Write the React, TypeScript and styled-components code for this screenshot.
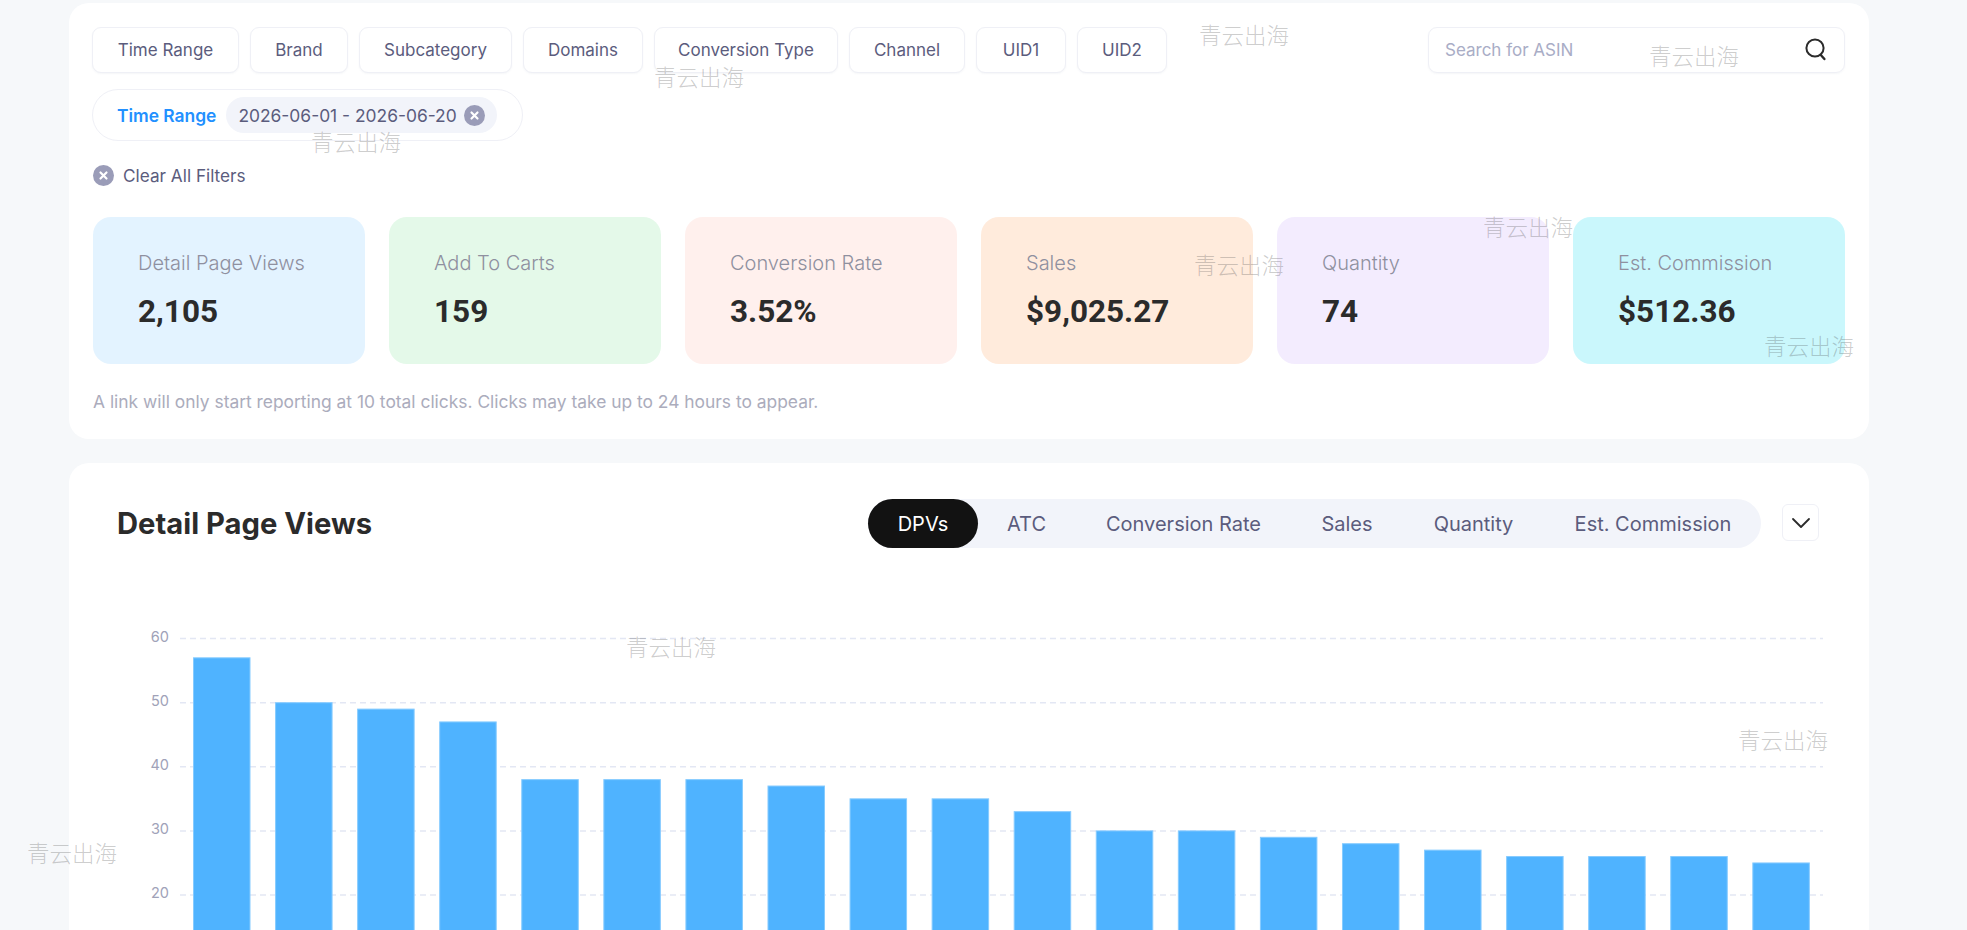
import React from 'react';
import styled, { createGlobalStyle } from 'styled-components';

const GlobalStyle = createGlobalStyle`
	html, body {
		margin: 0;
		padding: 0;
		height: 930px;
		overflow: hidden;
		background: #f6f8fa;
		font-family: Inter, "Noto Sans", sans-serif;
	}
`;

const Page = styled.div`
	position: relative;
	height: 930px;
	overflow: hidden;
	padding: 3px 98px 0 69px;
	box-sizing: border-box;
`;
const Card = styled.section`
	background: #fff;
	border-radius: 20px;
`;
const FilterCard = styled(Card)`
	padding: 24px 24px 23px 24px;
`;
const ChartCard = styled(Card)`
	margin-top: 24px;
	height: 560px;
	overflow: hidden;
`;
const TopRow = styled.div`
	display: flex;
	justify-content: space-between;
`;
const FilterList = styled.div`
	display: flex;
	gap: 11px;
	margin-left: -1px;
`;
const FilterButton = styled.button<{ $w: number }>`
	width: ${(p) => p.$w}px;
	height: 45.5px;
	padding: 0;
	background: #fff;
	border: 1px solid #eff0f6;
	border-radius: 9px;
	box-shadow: 0 1px 2px rgba(90, 95, 140, 0.06);
	color: #5b5c7d;
	font-family: inherit;
	font-size: 17px;
	box-sizing: border-box;
`;
const SearchBox = styled.div`
	display: flex;
	align-items: center;
	width: 417px;
	height: 45.5px;
	padding: 0 17px 0 16px;
	border: 1px solid #eff0f6;
	border-radius: 9px;
	box-shadow: 0 1px 2px rgba(90, 95, 140, 0.06);
	box-sizing: border-box;
`;
const SearchInput = styled.input`
	flex: 1;
	border: 0;
	outline: 0;
	padding: 0;
	font-family: inherit;
	font-size: 17px;
	background: transparent;

	&::placeholder {
		color: #a9adc6;
		opacity: 1;
	}
`;
const AppliedFilter = styled.div`
	display: inline-flex;
	align-items: center;
	gap: 10px;
	height: 52px;
	margin: 16.5px 0 0 -1px;
	padding: 0 25px 0 24px;
	border: 1px solid #eff0f6;
	border-radius: 26px;
	box-sizing: border-box;
`;
const AppliedLabel = styled.span`
	color: #2290ff;
	font-size: 17.4px;
	font-weight: 600;
`;
const Chip = styled.span`
	display: inline-flex;
	align-items: center;
	gap: 7px;
	height: 36px;
	padding: 0 12px;
	background: #f2f4fa;
	border-radius: 18px;
	color: #5b5c7d;
	font-size: 17.4px;
`;
const ClearRow = styled.div`
	display: flex;
	align-items: center;
	gap: 9px;
	height: 22px;
	margin-top: 23px;
	color: #5b5c7d;
	font-size: 17.2px;
`;
const Stats = styled.div`
	display: grid;
	grid-template-columns: repeat(6, 272px);
	gap: 24px;
	margin-top: 31px;
`;
const StatCard = styled.div<{ $bg: string }>`
	height: 147px;
	padding: 34px 0 0 45px;
	background: ${(p) => p.$bg};
	border-radius: 18px;
	box-sizing: border-box;
`;
const StatLabel = styled.div`
	color: #8f909f;
	font-size: 20px;
	font-weight: 300;
	line-height: 24px;
`;
const StatValue = styled.div`
	margin-top: 19px;
	color: #2b2b2b;
	font-family: Roboto, sans-serif;
	font-size: 31.5px;
	font-weight: 700;
	line-height: 36px;
`;
const Note = styled.p`
	margin: 24px 0 0;
	color: #abacbc;
	font-size: 17.4px;
	line-height: 28px;
`;
const ChartHeader = styled.div`
	display: flex;
	align-items: center;
	justify-content: space-between;
	padding: 36px 50px 0 48px;
`;
const ChartTitle = styled.h2`
	margin: 0;
	color: #2b2b2b;
	font-size: 29.2px;
	font-weight: 700;
`;
const HeaderRight = styled.div`
	display: flex;
	align-items: center;
	gap: 21px;
`;
const Tabs = styled.div`
	display: flex;
	height: 49px;
	background: #f2f4fa;
	border-radius: 25px;
`;
const Tab = styled.div<{ $active?: boolean; $w: number }>`
	display: flex;
	align-items: center;
	justify-content: center;
	width: ${(p) => p.$w}px;
	border-radius: 25px;
	font-size: 20px;
	color: ${(p) => (p.$active ? '#fff' : '#5b5c7d')};
	background: ${(p) => (p.$active ? '#121212' : 'transparent')};
`;
const ExpandButton = styled.div`
	display: flex;
	align-items: center;
	justify-content: center;
	width: 37px;
	height: 37px;
	margin-bottom: 2px;
	border: 1px solid #eff0f6;
	border-radius: 6px;
	box-sizing: border-box;
`;
const ChartSvg = styled.svg`
	display: block;
	margin-top: 60px;
`;
const Watermark = styled.span<{ $x: number; $y: number }>`
	position: absolute;
	left: ${(p) => p.$x}px;
	top: ${(p) => p.$y}px;
	color: rgba(60, 60, 60, 0.27);
	font-family: "Noto Sans CJK SC", sans-serif;
	font-size: 22.5px;
	font-weight: 300;
	line-height: 24px;
	white-space: nowrap;
	pointer-events: none;
`;

const filters = [
	{ label: 'Time Range', w: 147 },
	{ label: 'Brand', w: 98 },
	{ label: 'Subcategory', w: 153 },
	{ label: 'Domains', w: 120 },
	{ label: 'Conversion Type', w: 184 },
	{ label: 'Channel', w: 116 },
	{ label: 'UID1', w: 90 },
	{ label: 'UID2', w: 90 },
];
const stats = [
	{ label: 'Detail Page Views', value: '2,105', bg: '#e3f3ff' },
	{ label: 'Add To Carts', value: '159', bg: '#e4f9e9' },
	{ label: 'Conversion Rate', value: '3.52%', bg: '#fff0ed' },
	{ label: 'Sales', value: '$9,025.27', bg: '#ffebdc' },
	{ label: 'Quantity', value: '74', bg: '#f3ecfe' },
	{ label: 'Est. Commission', value: '$512.36', bg: '#caf7fc' },
];
const tabs = [
	{ label: 'DPVs', w: 110 },
	{ label: 'ATC', w: 97 },
	{ label: 'Conversion Rate', w: 217 },
	{ label: 'Sales', w: 110 },
	{ label: 'Quantity', w: 143 },
	{ label: 'Est. Commission', w: 216 },
];
const bars = [57, 50, 49, 47, 38, 38, 38, 37, 35, 35, 33, 30, 30, 29, 28, 27, 26, 26, 26, 25];
const ticks = [60, 50, 40, 30, 20];
const watermarks = [
	[1199, 22], [654, 64], [311, 129], [1649, 43], [1483, 214],
	[1194, 252], [1764, 333], [626, 634], [1738, 727], [27, 840],
];

const tickY = (v: number) => 895 + (20 - v) * 6.41;

const ClearIcon: React.FC = () => (
	<svg width="21" height="21" viewBox="0 0 21 21">
		<circle cx="10.5" cy="10.5" r="10.5" fill="#9a9cb8" />
		<path d="M7.5 7.5l6 6M13.5 7.5l-6 6" stroke="#fff" strokeWidth="2.2" strokeLinecap="round" />
	</svg>
);

const SearchIcon: React.FC = () => (
	<svg width="22" height="23" viewBox="0 0 22 23" fill="none" stroke="#2b2b2b">
		<circle cx="10" cy="10" r="8.6" strokeWidth="2" />
		<path d="M15.8 17l3.6 4" strokeWidth="2.4" strokeLinecap="round" />
	</svg>
);

const ChevronIcon: React.FC = () => (
	<svg width="20" height="12" viewBox="0 0 20 12" fill="none" stroke="#2b2b2b" strokeWidth="1.8" strokeLinecap="round" strokeLinejoin="round">
		<path d="M2 2l8 8 8-8" />
	</svg>
);

const App: React.FC = () => {
	return (
		<Page>
			<GlobalStyle />
			<FilterCard>
				<TopRow>
					<FilterList>
						{filters.map((f) => (
							<FilterButton key={f.label} $w={f.w}>
								{f.label}
							</FilterButton>
						))}
					</FilterList>
					<SearchBox>
						<SearchInput placeholder="Search for ASIN" readOnly />
						<SearchIcon />
					</SearchBox>
				</TopRow>
				<AppliedFilter>
					<AppliedLabel>Time Range</AppliedLabel>
					<Chip>
						2026-06-01 - 2026-06-20
						<ClearIcon />
					</Chip>
				</AppliedFilter>
				<ClearRow>
					<ClearIcon />
					Clear All Filters
				</ClearRow>
				<Stats>
					{stats.map((s) => (
						<StatCard key={s.label} $bg={s.bg}>
							<StatLabel>{s.label}</StatLabel>
							<StatValue>{s.value}</StatValue>
						</StatCard>
					))}
				</Stats>
				<Note>A link will only start reporting at 10 total clicks. Clicks may take up to 24 hours to appear.</Note>
			</FilterCard>
			<ChartCard>
				<ChartHeader>
					<ChartTitle>Detail Page Views</ChartTitle>
					<HeaderRight>
						<Tabs>
							{tabs.map((t, i) => (
								<Tab key={t.label} $active={i === 0} $w={t.w}>
									{t.label}
								</Tab>
							))}
						</Tabs>
						<ExpandButton>
							<ChevronIcon />
						</ExpandButton>
					</HeaderRight>
				</ChartHeader>
				<ChartSvg width="1800" height="340" viewBox="69 608 1800 340">
					{ticks.map((t) => (
						<g key={t}>
							<line x1="180" x2="1823" y1={tickY(t)} y2={tickY(t)} stroke="#e3e7f4" strokeWidth="1.5" strokeDasharray="6 4" />
							<text x="169" y={tickY(t) + 3} textAnchor="end" fontFamily="Inter" fontSize="14.5" fill="#a0a2b8">
								{t}
							</text>
						</g>
					))}
					{bars.map((b, i) => (
						<rect key={i} x={193.5 + i * 82.07} y={tickY(b)} width="56.5" height={950 - tickY(b)} fill="#4fb3ff" stroke="#86cbff" strokeWidth="1" />
					))}
				</ChartSvg>
			</ChartCard>
			{watermarks.map(([x, y]) => (
				<Watermark key={x} $x={x} $y={y}>
					青云出海
				</Watermark>
			))}
		</Page>
	);
};

export default App;
